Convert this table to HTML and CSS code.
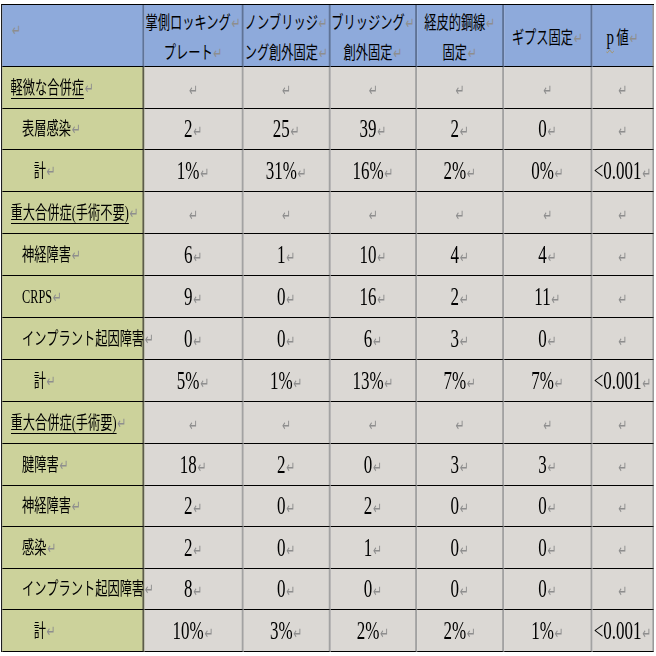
FILE: index.html
```html
<!DOCTYPE html>
<html lang="ja">
<head>
<meta charset="utf-8">
<title>合併症比較表</title>
<link rel="stylesheet" href="styles.css">
</head>
<body>
<div class="page">
<table class="grid">
<colgroup>
<col class="w1"><col class="w2"><col class="w3"><col class="w4"><col class="w5"><col class="w6"><col class="w7">
</colgroup>
<thead>
<tr>
<th class="corner"><span class="pm">↵</span></th>
<th>掌側ロッキング<span class="pm">↵</span><br>プレート<span class="pm">↵</span></th>
<th>ノンブリッジ<span class="pm">↵</span><br>ング創外固定<span class="pm">↵</span></th>
<th>ブリッジング<span class="pm">↵</span><br>創外固定<span class="pm">↵</span></th>
<th>経皮的鋼線<span class="pm">↵</span><br>固定<span class="pm">↵</span></th>
<th>ギプス固定<span class="pm">↵</span></th>
<th><span class="sq">p</span> 値<span class="pm">↵</span></th>
</tr>
</thead>
<tbody>
<tr><td class="lab sec"><u>軽微な合併症</u><span class="pm">↵</span></td><td><span class="pm">↵</span></td><td><span class="pm">↵</span></td><td><span class="pm">↵</span></td><td><span class="pm">↵</span></td><td><span class="pm">↵</span></td><td><span class="pm">↵</span></td></tr>
<tr class="s"><td class="lab sub">表層感染<span class="pm">↵</span></td><td>2<span class="pm">↵</span></td><td>25<span class="pm">↵</span></td><td>39<span class="pm">↵</span></td><td>2<span class="pm">↵</span></td><td>0<span class="pm">↵</span></td><td><span class="pm">↵</span></td></tr>
<tr><td class="lab tot">計<span class="pm">↵</span></td><td>1%<span class="pm">↵</span></td><td>31%<span class="pm">↵</span></td><td>16%<span class="pm">↵</span></td><td>2%<span class="pm">↵</span></td><td>0%<span class="pm">↵</span></td><td>&lt;0.001<span class="pm">↵</span></td></tr>
<tr><td class="lab sec"><u>重大合併症(手術不要)</u><span class="pm">↵</span></td><td><span class="pm">↵</span></td><td><span class="pm">↵</span></td><td><span class="pm">↵</span></td><td><span class="pm">↵</span></td><td><span class="pm">↵</span></td><td><span class="pm">↵</span></td></tr>
<tr><td class="lab sub">神経障害<span class="pm">↵</span></td><td>6<span class="pm">↵</span></td><td>1<span class="pm">↵</span></td><td>10<span class="pm">↵</span></td><td>4<span class="pm">↵</span></td><td>4<span class="pm">↵</span></td><td><span class="pm">↵</span></td></tr>
<tr><td class="lab sub">CRPS<span class="pm">↵</span></td><td>9<span class="pm">↵</span></td><td>0<span class="pm">↵</span></td><td>16<span class="pm">↵</span></td><td>2<span class="pm">↵</span></td><td>11<span class="pm">↵</span></td><td><span class="pm">↵</span></td></tr>
<tr><td class="lab sub">インプラント起因障害<span class="pm">↵</span></td><td>0<span class="pm">↵</span></td><td>0<span class="pm">↵</span></td><td>6<span class="pm">↵</span></td><td>3<span class="pm">↵</span></td><td>0<span class="pm">↵</span></td><td><span class="pm">↵</span></td></tr>
<tr><td class="lab tot">計<span class="pm">↵</span></td><td>5%<span class="pm">↵</span></td><td>1%<span class="pm">↵</span></td><td>13%<span class="pm">↵</span></td><td>7%<span class="pm">↵</span></td><td>7%<span class="pm">↵</span></td><td>&lt;0.001<span class="pm">↵</span></td></tr>
<tr><td class="lab sec"><u>重大合併症(手術要)</u><span class="pm">↵</span></td><td><span class="pm">↵</span></td><td><span class="pm">↵</span></td><td><span class="pm">↵</span></td><td><span class="pm">↵</span></td><td><span class="pm">↵</span></td><td><span class="pm">↵</span></td></tr>
<tr><td class="lab sub">腱障害<span class="pm">↵</span></td><td>18<span class="pm">↵</span></td><td>2<span class="pm">↵</span></td><td>0<span class="pm">↵</span></td><td>3<span class="pm">↵</span></td><td>3<span class="pm">↵</span></td><td><span class="pm">↵</span></td></tr>
<tr class="s"><td class="lab sub">神経障害<span class="pm">↵</span></td><td>2<span class="pm">↵</span></td><td>0<span class="pm">↵</span></td><td>2<span class="pm">↵</span></td><td>0<span class="pm">↵</span></td><td>0<span class="pm">↵</span></td><td><span class="pm">↵</span></td></tr>
<tr><td class="lab sub">感染<span class="pm">↵</span></td><td>2<span class="pm">↵</span></td><td>0<span class="pm">↵</span></td><td>1<span class="pm">↵</span></td><td>0<span class="pm">↵</span></td><td>0<span class="pm">↵</span></td><td><span class="pm">↵</span></td></tr>
<tr class="s"><td class="lab sub">インプラント起因障害<span class="pm">↵</span></td><td>8<span class="pm">↵</span></td><td>0<span class="pm">↵</span></td><td>0<span class="pm">↵</span></td><td>0<span class="pm">↵</span></td><td>0<span class="pm">↵</span></td><td><span class="pm">↵</span></td></tr>
<tr><td class="lab tot">計<span class="pm">↵</span></td><td>10%<span class="pm">↵</span></td><td>3%<span class="pm">↵</span></td><td>2%<span class="pm">↵</span></td><td>2%<span class="pm">↵</span></td><td>1%<span class="pm">↵</span></td><td>&lt;0.001<span class="pm">↵</span></td></tr>
</tbody>
</table>
</div>
</body>
</html>
```

FILE: styles.css
```css
html, body {
  margin: 0;
  padding: 0;
  background: #ffffff;
  overflow: hidden;
}

.page {
  width: 656px;
  height: 656px;
  padding: 4px 0 0 1px;
  box-sizing: border-box;
}

.grid {
  border-collapse: separate;
  border-spacing: 0;
  table-layout: fixed;
  width: 961px;
  transform: scaleX(0.68);
  transform-origin: 0 0;
  font-family: "Liberation Serif", "Noto Sans CJK JP", serif;
  color: #000;
  border-top: 1px solid #000;
  border-left: 2px solid #1e1e1e;
}

.w1 { width: 209px; }
.w2 { width: 146px; }
.w3 { width: 128px; }
.w4 { width: 127px; }
.w5 { width: 128px; }
.w6 { width: 130px; }
.w7 { width: 91px; }

.grid th,
.grid td {
  padding: 0;
  border: 0;
  border-bottom: 1px solid #000;
  border-right: 3px solid #a2a2a2;
  text-align: center;
  vertical-align: middle;
  white-space: nowrap;
}

.grid td.lab {
  border-right: 3px solid #5c5c4a;
}

.grid th {
  border-right: 3px solid #5f7396;
}

.grid th:last-child,
.grid td:last-child {
  border-right: 3px solid #9a9a9a;
}

.grid thead tr {
  height: 62px;
}

.grid th {
  background: #8eaadb;
  font-family: "Noto Sans CJK JP", sans-serif;
  font-weight: 400;
  font-size: 18px;
  line-height: 30px;
  overflow: hidden;
}

.grid th.corner {
  text-align: left;
  padding-left: 13px;
  padding-bottom: 16px;
}

.grid tbody tr {
  height: 42px;
}

.grid tbody tr.s {
  height: 41px;
}

.grid td {
  background: #dbd8d4;
  font-size: 25px;
  line-height: 28px;
}

.grid td.lab {
  background: #ccd29b;
  text-align: left;
  font-size: 18px;
}

.grid td.sec { padding-left: 12px; }
.grid td.sub { padding-left: 29px; }
.grid td.tot { padding-left: 46px; }

.grid td.sec u {
  text-decoration: underline;
  text-decoration-thickness: 1px;
  text-underline-offset: 4px;
}

.pm {
  font-family: "DejaVu Sans", sans-serif;
  font-size: 16px;
  line-height: 1;
  color: #8e8e8e;
  margin-left: 1px;
}

.sq {
  font-family: "Liberation Serif", serif;
  font-size: 22px;
  line-height: 1;
  text-decoration: underline wavy #a88d4c;
  text-decoration-thickness: 1px;
  text-underline-offset: 5px;
}
```
